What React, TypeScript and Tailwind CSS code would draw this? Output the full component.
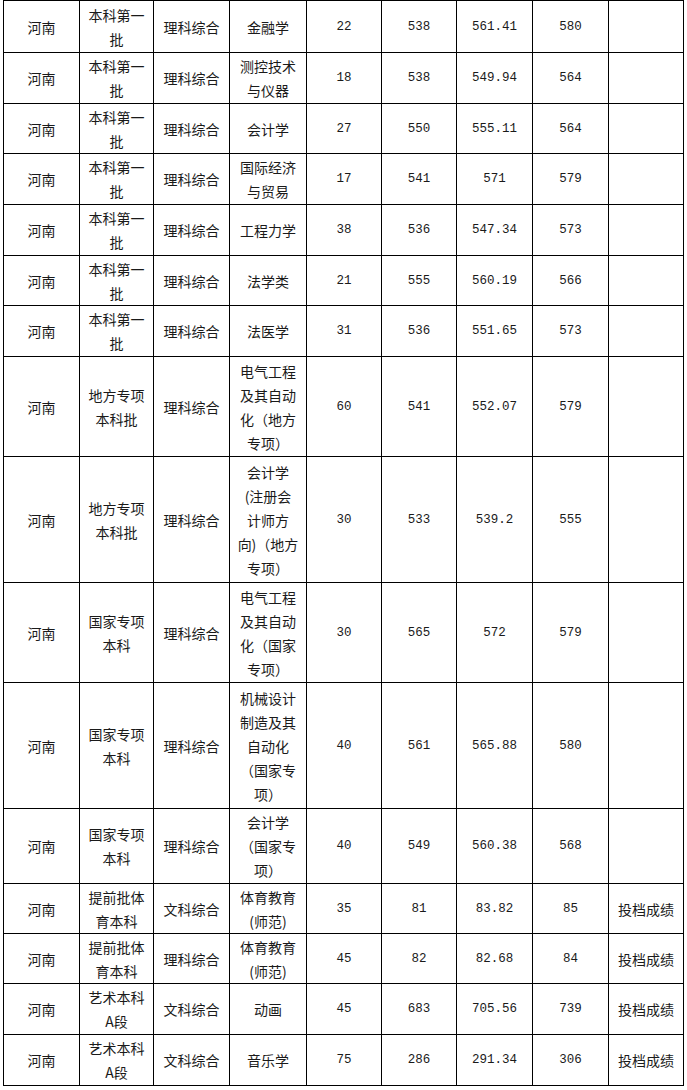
import React from "react";

type Row = {
  h: number;
  prov: string;
  batch: string[];
  subj: string;
  major: string[];
  plan: string;
  min: string;
  avg: string;
  max: string;
  note: string;
};

const r = (
  h: number,
  batch: string,
  subj: string,
  major: string,
  plan: string,
  min: string,
  avg: string,
  max: string,
  note = ""
): Row => ({
  h,
  prov: "河南",
  batch: batch.split("/"),
  subj,
  major: major.split("/"),
  plan,
  min,
  avg,
  max,
  note,
});

const rows: Row[] = [
  r(52, "本科第一/批", "理科综合", "金融学", "22", "538", "561.41", "580"),
  r(51, "本科第一/批", "理科综合", "测控技术/与仪器", "18", "538", "549.94", "564"),
  r(50, "本科第一/批", "理科综合", "会计学", "27", "550", "555.11", "564"),
  r(51, "本科第一/批", "理科综合", "国际经济/与贸易", "17", "541", "571", "579"),
  r(51, "本科第一/批", "理科综合", "工程力学", "38", "536", "547.34", "573"),
  r(50, "本科第一/批", "理科综合", "法学类", "21", "555", "560.19", "566"),
  r(51, "本科第一/批", "理科综合", "法医学", "31", "536", "551.65", "573"),
  r(100, "地方专项/本科批", "理科综合", "电气工程/及其自动/化（地方/专项）", "60", "541", "552.07", "579"),
  r(126, "地方专项/本科批", "理科综合", "会计学/(注册会/计师方/向)（地方/专项）", "30", "533", "539.2", "555"),
  r(100, "国家专项/本科", "理科综合", "电气工程/及其自动/化（国家/专项）", "30", "565", "572", "579"),
  r(126, "国家专项/本科", "理科综合", "机械设计/制造及其/自动化/（国家专/项）", "40", "561", "565.88", "580"),
  r(75, "国家专项/本科", "理科综合", "会计学/（国家专/项）", "40", "549", "560.38", "568"),
  r(50, "提前批体/育本科", "文科综合", "体育教育/(师范)", "35", "81", "83.82", "85", "投档成绩"),
  r(50, "提前批体/育本科", "理科综合", "体育教育/(师范)", "45", "82", "82.68", "84", "投档成绩"),
  r(51, "艺术本科/A段", "文科综合", "动画", "45", "683", "705.56", "739", "投档成绩"),
  r(51, "艺术本科/A段", "文科综合", "音乐学", "75", "286", "291.34", "306", "投档成绩"),
];

function Lines({ items }: { items: string[] }) {
  return (
    <>
      {items.map((t, i) => (
        <div key={i} className="whitespace-nowrap">
          {t}
        </div>
      ))}
    </>
  );
}

const td = "border border-black text-center align-middle p-0";
const cn = "font-['Noto_Sans_CJK_SC',sans-serif] text-[14px]";
const num = "font-['Liberation_Mono',monospace] text-[12.5px]";

export default function App() {
  return (
    <div className="w-[687px] h-[1090px] bg-white pl-[3px] overflow-hidden">
      <table className="table-fixed border-collapse w-[681px] leading-[24px] text-[#1a1a1a]">
        <colgroup>
          <col className="w-[76px]" />
          <col className="w-[74px]" />
          <col className="w-[76px]" />
          <col className="w-[77px]" />
          <col className="w-[75px]" />
          <col className="w-[75px]" />
          <col className="w-[76px]" />
          <col className="w-[76px]" />
          <col className="w-[75px]" />
        </colgroup>
        <tbody>
          {rows.map((row, i) => (
            <tr key={i} style={{ height: row.h }}>
              <td className={`${td} ${cn}`}>{row.prov}</td>
              <td className={`${td} ${cn}`}>
                <Lines items={row.batch} />
              </td>
              <td className={`${td} ${cn}`}>{row.subj}</td>
              <td className={`${td} ${cn}`}>
                <Lines items={row.major} />
              </td>
              <td className={`${td} ${num}`}>{row.plan}</td>
              <td className={`${td} ${num}`}>{row.min}</td>
              <td className={`${td} ${num}`}>{row.avg}</td>
              <td className={`${td} ${num}`}>{row.max}</td>
              <td className={`${td} ${cn}`}>{row.note}</td>
            </tr>
          ))}
        </tbody>
      </table>
    </div>
  );
}
